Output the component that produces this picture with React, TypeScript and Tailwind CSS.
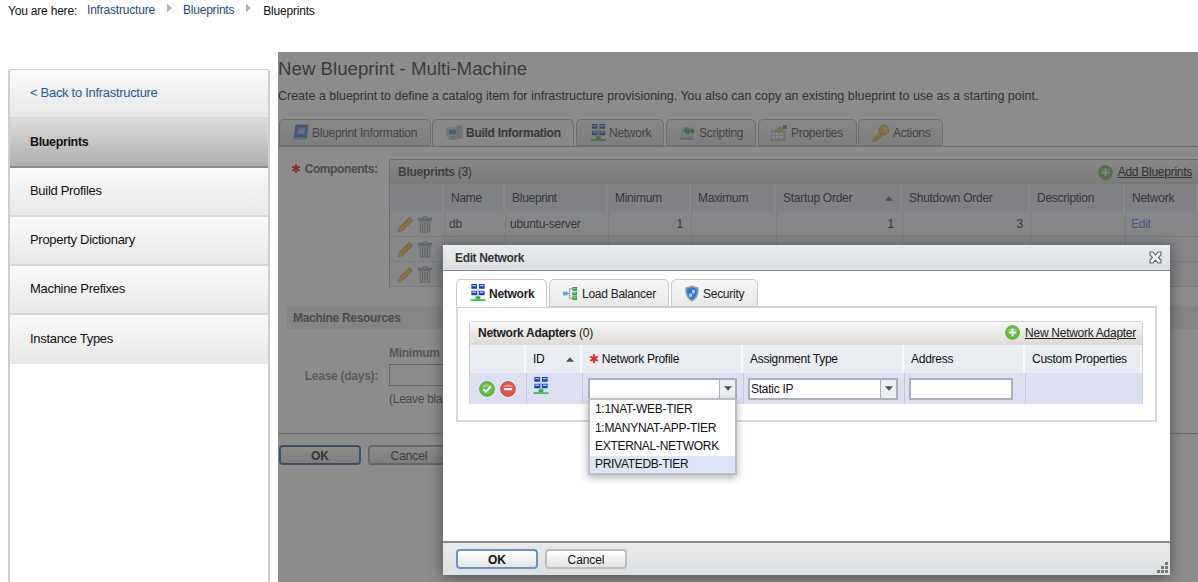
import type { ReactNode } from "react";

function NetworkIcon({ className = "" }: { className?: string }) {
  return (
    <svg viewBox="0 0 16 19" className={className}>
      <path d="M1 0h6v5H1zM9 0h6v5H9zM1 7h6v5H1zM9 7h6v5H9z" fill="#1d3fb8" />
      <path d="M2 1h4v1.500H2zM10 1h4v1.500h-4zM2 8h4v1.500H2zM10 8h4v1.500h-4z" fill="#a4c4f2" />
      <path d="M7.500 5h1v9h-1z" fill="#8a97a8" />
      <path d="M5.500 13h5v3h-5z" fill="#33b04a" />
      <path d="M0 16h16v2H0z" fill="#3fc25a" />
    </svg>
  );
}

function LoadBalancerIcon({ className = "" }: { className?: string }) {
  return (
    <svg viewBox="0 0 16 16" className={className}>
      <path d="M7 3h4M7 3v10M7 8H4M7 13h4" stroke="#8d969e" fill="none" />
      <path d="M0 6h5v4H0z" fill="#6d9fdc" />
      <path d="M10 1h5v4h-5zM10 6h5v4h-5zM10 11h5v4h-5z" fill="#3e9a45" />
      <path d="M11 2h3v1h-3zM11 7h3v1h-3zM11 12h3v1h-3z" fill="#a7dca8" />
    </svg>
  );
}

function ShieldIcon({ className = "" }: { className?: string }) {
  return (
    <svg viewBox="0 0 16 18" className={className}>
      <path d="M8 .5 15 3c.3 7-1.800 12-7 14.500C2.800 15 .7 10 1 3z" fill="#8d99a8" />
      <path d="M8 2.500 13.300 4.300C13.500 9.500 12 13.500 8 15.500 4 13.500 2.500 9.500 2.700 4.300z" fill="#2f78d0" />
      <path d="M8 5h3v4H8zM5 9h3v3.500H5z" fill="#a9d0f5" />
    </svg>
  );
}

function RoundIcon({ kind, className = "" }: { kind: "ok" | "remove" | "add"; className?: string }) {
  const fill = kind === "remove" ? "#e0564c" : "#66bd44";
  const stroke = kind === "remove" ? "#c4443c" : "#4ea63a";
  return (
    <svg viewBox="0 0 16 16" className={className}>
      <circle cx="8" cy="8" r="7.300" fill={fill} stroke={stroke} />
      <path d="M2.500 6.500A6 5 0 0 1 13.500 6.500Q8 4.500 2.500 6.500z" fill="#fff" opacity=".35" />
      {kind === "ok" && <path d="m4.500 8.300 2.500 2.300 4.500-4.800" stroke="#fff" strokeWidth="2" fill="none" />}
      {kind === "remove" && <path d="M4 7h8v2.200H4z" fill="#fff" />}
      {kind === "add" && <path d="M7 4h2v3h3v2H9v3H7V9H4V7h3z" fill="#fff" />}
    </svg>
  );
}

function PencilIcon() {
  return (
    <svg viewBox="0 0 17 17" className="w-[17px] h-[17px]">
      <path d="M12.500 1.500 15.500 4.500 5.500 14.500 1 16l1.500-4.500z" fill="#f4cf70" stroke="#b89a50" strokeWidth=".7" />
      <path d="M1 16l1.500-4.500 3 3z" fill="#ecdcb8" />
    </svg>
  );
}

function TrashIcon() {
  return (
    <svg viewBox="0 0 16 18" className="w-[16px] h-[17px]">
      <path d="M6 1h4v1.500h5V4H1V2.500h5z" fill="#d8dadd" stroke="#8a9095" strokeWidth=".6" />
      <path d="M2.500 5h11l-.8 12H3.300z" fill="#eceef0" stroke="#8a9095" strokeWidth=".7" />
      <path d="M5.500 6.500v9M8 6.500v9M10.500 6.500v9" stroke="#9a9fa4" />
    </svg>
  );
}

function BlueprintIcon() {
  return (
    <svg viewBox="0 0 16 17" className="w-[16px] h-[17px]">
      <path d="M3 1h12l-1.500 13H1z" fill="#3b74c8" stroke="#264f96" strokeWidth=".7" />
      <path d="M5 4h7l-.5 6H4.500z" fill="#8fb7ea" />
      <path d="M0 13.500h12V16H0z" fill="#9ec0ee" />
    </svg>
  );
}

function BuildIcon() {
  return (
    <svg viewBox="0 0 18 17" className="w-[17px] h-[16px]">
      <path d="M12 1h5v13h-5z" fill="#b4b9bf" stroke="#777" strokeWidth=".5" />
      <path d="M1 3h12v9H1z" fill="#d2d5d9" stroke="#777" strokeWidth=".5" />
      <path d="M3 5h8v5H3z" fill="#3b74c8" />
      <path d="M4 12h6v2h2v1.500H2V14h2z" fill="#a1a6ab" />
    </svg>
  );
}

function ScriptIcon() {
  return (
    <svg viewBox="0 0 17 16" className="w-[16px] h-[16px]">
      <path d="M2 3h11v9H2z" fill="#e3e5e8" stroke="#80868c" strokeWidth=".6" />
      <path d="M0 13h15v2H0z" fill="#8b97a8" />
      <path d="M3 6 7 1l1.500 3H15v4H9l1 3z" fill="#35a846" />
    </svg>
  );
}

function PropertiesIcon() {
  return (
    <svg viewBox="0 0 17 16" className="w-[17px] h-[16px]">
      <path d="M0 6h14v10H0z" fill="#c9ccd0" stroke="#777" strokeWidth=".5" />
      <path d="M1 8h3v2H1zM5 8h3v2H5zM9 8h3v2H9zM1 11h3v2H1zM5 11h3v2H5zM9 11h3v2H9z" fill="#fff" />
      <path d="M3 6 8 2h6l-3 4z" fill="#dcb34a" />
      <path d="M12 0h4v4h-4z" fill="#3fa548" />
    </svg>
  );
}

function KeyIcon() {
  return (
    <svg viewBox="0 0 18 18" className="w-[18px] h-[18px]">
      <circle cx="12" cy="6" r="5" fill="#e8bd45" stroke="#a8842a" strokeWidth=".7" />
      <path d="M8.500 8 1 15v2.500h3V16h2v-2h2l2.500-3z" fill="#e8bd45" stroke="#a8842a" strokeWidth=".7" />
      <circle cx="13.500" cy="4.500" r="1.300" fill="#fff3c4" />
    </svg>
  );
}

function CloseIcon() {
  return (
    <svg viewBox="0 0 13 13" className="w-[13px] h-[13px]">
      <path d="M1 1h3l2.500 2.800L9 1h3v3L9.500 6.500 12 9v3H9L6.500 9.200 4 12H1V9l2.500-2.500L1 4z" fill="#f3f4f5" stroke="#666c72" strokeWidth="1.200" />
    </svg>
  );
}

function Caret({ up = false, className = "" }: { up?: boolean; className?: string }) {
  return (
    <svg viewBox="0 0 9 5" className={`w-[8px] h-[5px] ${className}`}>
      <path d={up ? "M4.500 0 9 5H0z" : "M0 0h9L4.500 5z"} fill="#4d5257" />
    </svg>
  );
}

function CrumbArrow() {
  return (
    <svg viewBox="0 0 6 10" className="w-[5px] h-[10px] ml-[12px] mb-[6px]">
      <path d="M0 0l6 5-6 5z" fill="#b1b1b1" />
    </svg>
  );
}

function SideItem({ label, active, link, last }: { label: string; active?: boolean; link?: boolean; last?: boolean }) {
  const tone = active
    ? "bg-gradient-to-b from-[#dcdcdc] to-[#aeaeae] border-b-2 border-[#8b8b8b] font-bold text-[12.500px] tracking-[-0.35px] text-[#111]"
    : `bg-gradient-to-b from-[#fafafa] to-[#e8e8e8] text-[13px] tracking-[-0.3px] pb-[1px] ${last ? "" : "border-b-2 border-[#d8d8d8]"} ${link ? "text-[#1f5a96]" : "text-[#111]"}`;
  return <div className={`flex items-center h-[49px] pl-[20px] ${tone}`}>{label}</div>;
}

function MainTab({ icon, label, active, width }: { icon: ReactNode; label: string; active?: boolean; width: string }) {
  return (
    <div
      className={`${width} flex items-center gap-[3px] text-[12px] tracking-[-0.27px] rounded-t-[5px] border border-[#c8c8c8] h-[27px] ${
        active ? "bg-[#f8f8f8] border-b-[#f8f8f8] font-bold text-[#666]" : "bg-gradient-to-b from-[#f5f5f5] to-[#e6e6e6] text-[#808080]"
      }`}
    >
      <span className="flex opacity-60">{icon}</span>
      {label}
    </div>
  );
}

function ModalTab({ icon, label, active, width }: { icon: ReactNode; label: string; active?: boolean; width: string }) {
  return (
    <div
      className={`${width} flex items-center text-[12px] tracking-[-0.27px] rounded-t-[5px] border border-[#c9c9c9] h-[28px] ${
        active ? "bg-white border-b-white font-bold text-[#222]" : "bg-gradient-to-b from-[#f6f6f6] to-[#e8e8e8] text-[#222]"
      }`}
    >
      {icon}
      <span className="pt-[2px]">{label}</span>
    </div>
  );
}

function FooterButton({ label, primary, dim }: { label: string; primary?: boolean; dim?: boolean }) {
  const text = dim ? (primary ? "text-[#666]" : "text-[#777]") : "text-[#111]";
  return (
    <button
      className={`w-[82px] h-[20px] rounded-[4px] text-[12px] tracking-[-0.1px] bg-gradient-to-b from-white to-[#e3e3e3] border-2 ${text} ${
        primary ? "border-[#6f93b8] font-bold" : "border-[#bdbdbd]"
      }`}
    >
      {label}
    </button>
  );
}

function HeadCell({ children, className = "" }: { children?: ReactNode; className?: string }) {
  return (
    <div className={`flex items-center whitespace-nowrap px-[7px] bg-[#e9ecf1] border-r-2 border-[#f8f8f8] text-[12px] tracking-[-0.27px] ${className}`}>
      {children}
    </div>
  );
}

function BlueprintRow({ name, blueprint, min, start, stop, edit }: { name?: string; blueprint?: string; min?: string; start?: string; stop?: string; edit?: boolean }) {
  return (
    <div className="grid grid-cols-[54px_61px_103px_83px_85px_126px_128px_95px_1fr] h-[25px] text-[12px] tracking-[-0.27px] text-[#6a6a6a] bg-[#f2f4f8] border-b border-[#e0e0e0]">
      <div className="flex items-center pl-[7px] gap-[3px]">
        <PencilIcon />
        <TrashIcon />
      </div>
      <div className="flex items-center px-[4px] border-l border-[#e0e0e0]">{name}</div>
      <div className="flex items-center px-[4px] border-l border-[#e0e0e0]">{blueprint}</div>
      <div className="flex items-center justify-end pr-[8px] border-l border-[#e0e0e0]">{min}</div>
      <div className="border-l border-[#e0e0e0]" />
      <div className="flex items-center justify-end pr-[8px] border-l border-[#e0e0e0]">{start}</div>
      <div className="flex items-center justify-end pr-[7px] border-l border-[#e0e0e0]">{stop}</div>
      <div className="border-l border-[#e0e0e0]" />
      <div className="flex items-center px-[5px] border-l border-[#e0e0e0] text-[#8f9af0]">{edit ? "Edit" : ""}</div>
    </div>
  );
}

function MainPanel() {
  return (
    <main className="relative flex-1 h-[530px] ml-[8px] overflow-hidden bg-white">
      <h1 className="text-[18.700px] leading-[24px] mt-[5px] text-[#6f6f6f]">New Blueprint - Multi-Machine</h1>
      <p className="text-[12.480px] leading-[16px] mt-[7px] text-[#5d5d5d] whitespace-nowrap">
        Create a blueprint to define a catalog item for infrastructure provisioning. You also can copy an existing blueprint to use as a starting point.
      </p>
      <div className="flex gap-[1px] mt-[15px] pl-[1px] border-b border-[#c8c8c8] h-[28px]">
        <MainTab width="w-[152px] pl-[13px]" icon={<BlueprintIcon />} label="Blueprint Information" />
        <MainTab width="w-[142px] pl-[13px]" active icon={<BuildIcon />} label="Build Information" />
        <MainTab width="w-[88px] ml-[1px] pl-[14px]" icon={<NetworkIcon className="w-[15px] h-[18px]" />} label="Network" />
        <MainTab width="w-[90px] ml-[1px] pl-[13px]" icon={<ScriptIcon />} label="Scripting" />
        <MainTab width="w-[99px] ml-[1px] pl-[12px]" icon={<PropertiesIcon />} label="Properties" />
        <MainTab width="w-[85px] pl-[13px]" icon={<KeyIcon />} label="Actions" />
      </div>
      <div className="flex mt-[12px]">
        <div className="w-[111px] shrink-0 pl-[13px] flex items-start gap-[4px] text-[12px] tracking-[-0.4px] font-bold text-[#8a8a8a] leading-[20px]">
          <span className="text-[#e06060] font-['DejaVu_Sans'] text-[12px]">✱</span> Components:
        </div>
        <div className="w-[809px] shrink-0 border-l border-t border-[#c8c8c8] rounded-tl-[3px]">
          <div className="flex items-center justify-between h-[24px] bg-gradient-to-b from-[#f6f6f6] to-[#dedede] pl-[8px] pr-[6px] text-[12px] tracking-[-0.27px] text-[#666]">
            <span>
              <b className="text-[#777]">Blueprints</b> (3)
            </span>
            <span className="flex items-center gap-[5px]">
              <RoundIcon kind="add" className="w-[15px] h-[15px] opacity-60" />
              <span className="underline text-[#5c5c5c]">Add Blueprints</span>
            </span>
          </div>
          <div className="grid grid-cols-[54px_61px_103px_83px_85px_126px_128px_95px_1fr] h-[28px] text-[#666]">
            <HeadCell />
            <HeadCell>Name</HeadCell>
            <HeadCell>Blueprint</HeadCell>
            <HeadCell>Minimum</HeadCell>
            <HeadCell>Maximum</HeadCell>
            <HeadCell className="justify-between">
              Startup Order
              <Caret up className="opacity-60" />
            </HeadCell>
            <HeadCell>Shutdown Order</HeadCell>
            <HeadCell>Description</HeadCell>
            <HeadCell>Network</HeadCell>
          </div>
          <BlueprintRow name="db" blueprint="ubuntu-server" min="1" start="1" stop="3" edit />
          <BlueprintRow />
          <BlueprintRow />
        </div>
      </div>
      <div className="ml-[9px] mt-[19px] h-[23px] flex items-center pl-[6px] bg-[#f2f2f2] text-[12px] tracking-[-0.3px] font-bold text-[#8c8c8c]">
        Machine Resources
      </div>
      <div className="flex mt-[17px] text-[12px] tracking-[-0.27px]">
        <div className="w-[111px] shrink-0 pt-[21px] text-right pr-[11px] font-bold text-[#aaa]">Lease (days):</div>
        <div>
          <div className="font-bold text-[#a0a0a0] leading-[14px]">Minimum</div>
          <div className="w-[120px] h-[22px] mt-[4px] border border-[#bbb] bg-white" />
          <div className="text-[#888] mt-[6px] leading-[14px]">(Leave blank</div>
        </div>
      </div>
      <div className="flex items-center gap-[7px] mt-[27px] pt-[11px] pl-px border-t border-[#ccc]">
        <FooterButton label="OK" primary dim />
        <FooterButton label="Cancel" dim />
      </div>
      <div className="absolute inset-0 bg-black/45" />
    </main>
  );
}

function EditNetworkDialog() {
  return (
    <div className="absolute left-[443px] top-[245px] w-[727px] h-[330px] flex flex-col bg-white shadow-[0_2px_14px_rgba(0,0,0,0.45)]">
      <div className="flex items-center justify-between h-[26px] shrink-0 pl-[12px] pr-[8px] bg-gradient-to-b from-[#eaecee] to-[#dcdfe2] border-b border-[#858b91] text-[12px] tracking-[-0.35px] font-bold text-[#333]">
        Edit Network
        <CloseIcon />
      </div>
      <div className="flex-1 relative px-[13px] pt-[8px]">
        <div className="flex gap-[2px] h-[28px]">
          <ModalTab width="w-[91px] pl-[13px] gap-[3px]" active icon={<NetworkIcon className="w-[16px] h-[18px]" />} label="Network" />
          <ModalTab width="w-[120px] pl-[13px] gap-[4px]" icon={<LoadBalancerIcon className="w-[15px] h-[15px]" />} label="Load Balancer" />
          <ModalTab width="w-[87px] pl-[12px] gap-[3px]" icon={<ShieldIcon className="w-[16px] h-[17px]" />} label="Security" />
        </div>
        <div className="-mt-px w-[701px] h-[116px] border-2 border-[#d8d8d8] border-t-[#d0d0d0] pt-[13px] pl-[11px]">
          <div className="w-[674px] border border-b-0 border-[#cfd2d6] rounded-t-[3px]">
            <div className="flex items-center justify-between h-[23px] pb-[2px] bg-gradient-to-b from-[#f8f8f8] to-[#dcd9d6] pl-[8px] pr-[6px] text-[12px] tracking-[-0.27px] text-[#222]">
              <span>
                <b>Network Adapters</b> (0)
              </span>
              <span className="flex items-center gap-[5px]">
                <RoundIcon kind="add" className="w-[15px] h-[15px]" />
                <span className="underline">New Network Adapter</span>
              </span>
            </div>
            <div className="grid grid-cols-[56px_56px_161px_161px_121px_1fr] h-[28px] text-[#111]">
              <HeadCell />
              <HeadCell className="justify-between pr-[6px]">
                ID
                <Caret up />
              </HeadCell>
              <HeadCell className="gap-[3px]">
                <span className="text-[#d62c2c] text-[12px] leading-none font-['DejaVu_Sans']">✱</span> Network Profile
              </HeadCell>
              <HeadCell>Assignment Type</HeadCell>
              <HeadCell>Address</HeadCell>
              <HeadCell>Custom Properties</HeadCell>
            </div>
            <div className="grid grid-cols-[56px_56px_161px_161px_121px_1fr] h-[31px] bg-[#dde0f3] text-[12px] tracking-[-0.27px] text-[#111]">
              <div className="flex items-center gap-[5px] pl-[9px]">
                <RoundIcon kind="ok" className="w-[16px] h-[16px]" />
                <RoundIcon kind="remove" className="w-[16px] h-[16px]" />
              </div>
              <div className="flex items-start pt-[4px] pl-[6px] border-l border-[#c6c9d8]">
                <NetworkIcon className="w-[16px] h-[18px]" />
              </div>
              <div className="flex items-center pl-[5px] border-l border-[#c6c9d8]">
                <div className="w-[149px] h-[22px] flex bg-white border-2 border-[#a9afbb]">
                  <div className="flex-1" />
                  <div className="w-[16px] flex items-center justify-center border-l border-[#a9afbb] bg-[#eceef1]">
                    <Caret />
                  </div>
                </div>
              </div>
              <div className="flex items-center pl-[4px] border-l border-[#c6c9d8]">
                <div className="w-[150px] h-[22px] flex bg-white border-2 border-[#a9afbb]">
                  <div className="flex-1 pl-[1px] leading-[18px]">Static IP</div>
                  <div className="w-[16px] flex items-center justify-center border-l border-[#a9afbb] bg-[#eceef1]">
                    <Caret />
                  </div>
                </div>
              </div>
              <div className="flex items-center pl-[4px] border-l border-[#c6c9d8]">
                <div className="w-[104px] h-[22px] bg-white border-2 border-[#a9afbb]" />
              </div>
              <div className="border-l border-[#c6c9d8]" />
            </div>
          </div>
        </div>
        <div className="absolute left-[145px] top-[127px] w-[149px] h-[77px] bg-white border-2 border-[#b9bec9] shadow-[0_3px_8px_rgba(0,0,0,0.3)] text-[12px] tracking-[-0.3px] text-[#111] flex flex-col">
          <div className="h-[18.500px] flex items-center pl-[5px]">1:1NAT-WEB-TIER</div>
          <div className="h-[18.500px] flex items-center pl-[5px]">1:MANYNAT-APP-TIER</div>
          <div className="h-[18.500px] flex items-center pl-[5px]">EXTERNAL-NETWORK</div>
          <div className="h-[17.500px] flex items-center pl-[5px] bg-[#dce6f5]">PRIVATEDB-TIER</div>
        </div>
      </div>
      <div className="relative h-[34px] shrink-0 flex items-center gap-[7px] pl-[13px] bg-gradient-to-b from-[#e8e9eb] to-[#dde0e2] border-t-2 border-[#858b91]">
        <FooterButton label="OK" primary />
        <FooterButton label="Cancel" />
        <svg viewBox="0 0 11 11" className="absolute right-[2px] bottom-[2px] w-[11px] h-[11px]">
          <path d="M8 0h3v3H8zM4 4h3v3H4zM8 4h3v3H8zM0 8h3v3H0zM4 8h3v3H4zM8 8h3v3H8z" fill="#777" />
        </svg>
      </div>
    </div>
  );
}

export default function App() {
  return (
    <div className="relative w-[1198px] h-[582px] overflow-hidden bg-white font-['Liberation_Sans',Arial,sans-serif]">
      <div className="flex items-center h-[52px] pl-[8px] pb-[30px] text-[12px] tracking-[-0.2px] text-[#111]">
        <span>You are here:</span>
        <a className="ml-[10px] mb-[3px] text-[#1f4a7a]">Infrastructure</a>
        <CrumbArrow />
        <a className="ml-[11px] mb-[3px] text-[#1f4a7a]">Blueprints</a>
        <CrumbArrow />
        <span className="ml-[12px]">Blueprints</span>
      </div>
      <div className="flex pl-[8px]">
        <aside className="w-[262px] h-[513px] mt-[17px] border-2 border-t border-b-0 border-[#cfcfcf] rounded-t-[3px] bg-white">
          <SideItem label="< Back to Infrastructure" link />
          <SideItem label="Blueprints" active />
          <SideItem label="Build Profiles" />
          <SideItem label="Property Dictionary" />
          <SideItem label="Machine Prefixes" />
          <SideItem label="Instance Types" last />
        </aside>
        <MainPanel />
      </div>
      <EditNetworkDialog />
    </div>
  );
}
